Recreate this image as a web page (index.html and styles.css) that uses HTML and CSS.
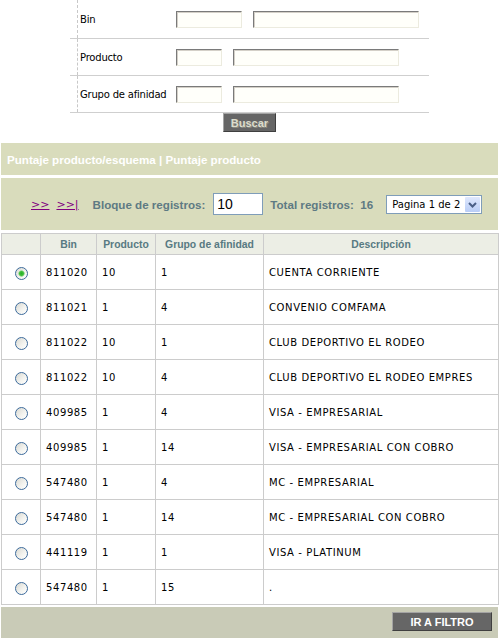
FILE: index.html
```html
<!DOCTYPE html>
<html lang="es">
<head>
<meta charset="utf-8">
<title>Puntaje producto</title>
<link rel="stylesheet" href="styles.css">
</head>
<body>
<div class="page">
  <form class="filter">
    <div class="frow frow-first">
      <label class="flabel">Bin</label>
      <input class="fin fin-short" type="text">
      <input class="fin fin-long" type="text">
    </div>
    <div class="frow">
      <label class="flabel">Producto</label>
      <input class="fin fin-tiny" type="text">
      <input class="fin fin-long" type="text">
    </div>
    <div class="frow">
      <label class="flabel">Grupo de afinidad</label>
      <input class="fin fin-tiny" type="text">
      <input class="fin fin-long" type="text">
    </div>
    <div class="factions"><button type="button" class="btn btn-buscar">Buscar</button></div>
  </form>

  <div class="bar bar-title">Puntaje producto/esquema | Puntaje producto</div>

  <div class="bar bar-pager">
    <a class="plink" href="#">&gt;&gt;</a>
    <a class="plink plink-last" href="#">&gt;&gt;|</a>
    <span class="plabel plabel-block">Bloque de registros:</span>
    <input class="pinput" type="text" value="10">
    <span class="plabel plabel-total">Total registros:&nbsp; 16</span>
    <div class="pselect">
      <span class="ptext">Pagina 1 de 2</span>
      <span class="parrow"><svg width="15" height="15" viewBox="0 0 15 15"><path d="M4 6 L7.5 9.5 L11 6" fill="none" stroke="#4a5f86" stroke-width="2"/></svg></span>
    </div>
  </div>

  <table class="grid">
    <colgroup>
      <col class="c-radio"><col class="c-bin"><col class="c-prod"><col class="c-grupo"><col class="c-desc">
    </colgroup>
    <thead>
      <tr><th></th><th>Bin</th><th>Producto</th><th>Grupo de afinidad</th><th>Descripción</th></tr>
    </thead>
    <tbody>
      <tr><td class="rc"><span class="radio radio-on"></span></td><td>811020</td><td>10</td><td>1</td><td>CUENTA CORRIENTE</td></tr>
      <tr><td class="rc"><span class="radio"></span></td><td>811021</td><td>1</td><td>4</td><td>CONVENIO COMFAMA</td></tr>
      <tr><td class="rc"><span class="radio"></span></td><td>811022</td><td>10</td><td>1</td><td>CLUB DEPORTIVO EL RODEO</td></tr>
      <tr><td class="rc"><span class="radio"></span></td><td>811022</td><td>10</td><td>4</td><td>CLUB DEPORTIVO EL RODEO EMPRES</td></tr>
      <tr><td class="rc"><span class="radio"></span></td><td>409985</td><td>1</td><td>4</td><td>VISA - EMPRESARIAL</td></tr>
      <tr><td class="rc"><span class="radio"></span></td><td>409985</td><td>1</td><td>14</td><td>VISA - EMPRESARIAL CON COBRO</td></tr>
      <tr><td class="rc"><span class="radio"></span></td><td>547480</td><td>1</td><td>4</td><td>MC - EMPRESARIAL</td></tr>
      <tr><td class="rc"><span class="radio"></span></td><td>547480</td><td>1</td><td>14</td><td>MC - EMPRESARIAL CON COBRO</td></tr>
      <tr><td class="rc"><span class="radio"></span></td><td>441119</td><td>1</td><td>1</td><td>VISA - PLATINUM</td></tr>
      <tr><td class="rc"><span class="radio"></span></td><td>547480</td><td>1</td><td>15</td><td>.</td></tr>
    </tbody>
  </table>

  <div class="bar bar-foot"><button type="button" class="btn btn-foot">IR A FILTRO</button></div>
</div>
</body>
</html>
```

FILE: styles.css
```css
html, body {
  margin: 0;
  padding: 0;
  background: #ffffff;
}

body {
  font-family: "DejaVu Sans", Verdana, sans-serif;
  font-size: 10px;
  color: #000;
}

.page {
  width: 497px;
  margin-left: 1px;
}

/* ---------- filter form ---------- */
.filter {
  width: 359px;
  margin: 0 0 0 69px;
}

.frow {
  display: flex;
  align-items: center;
  height: 36px;
  border-bottom: 1px solid #cfcfcf;
}

.frow-first {
  height: 38px;
}

.flabel {
  flex: 0 0 auto;
  align-self: stretch;
  display: flex;
  align-items: center;
  box-sizing: border-box;
  width: 99px;
  margin-left: 7px;
  padding-left: 2px;
  border-left: 1px dashed #c8c8c8;
  font-size: 10px;
  letter-spacing: -0.2px;
  color: #000;
  white-space: nowrap;
}

.fin {
  flex: 0 0 auto;
  box-sizing: border-box;
  height: 17px;
  margin: 0;
  padding: 0;
  background: #fffffa;
  border: 1px solid;
  border-color: #7a7a7a #ecebdf #ecebdf #7a7a7a;
  box-shadow: inset 1px 1px 0 #d4d0c8;
}

.fin + .fin {
  margin-left: 11px;
}

.fin-short { width: 66px; }
.fin-tiny { width: 46px; }
.fin-long { width: 166px; }

.factions {
  display: flex;
  justify-content: center;
}

.btn {
  box-sizing: border-box;
  margin: 0;
  padding: 0;
  background: #666666;
  border: 1px solid;
  border-color: #a4a4a4 #3f3f3f #3f3f3f #a4a4a4;
  font-family: "Liberation Sans", Arial, sans-serif;
  font-weight: bold;
  font-size: 11px;
  cursor: pointer;
}

.btn-buscar {
  width: 53px;
  height: 19px;
  color: #dcdccc;
  text-shadow: 1px 1px 0 #8a8a80;
}

/* ---------- bars ---------- */
.bar {
  box-sizing: border-box;
  width: 497px;
  background: #d9dcbc;
}

.bar-title {
  margin-top: 11px;
  height: 32px;
  padding-left: 6px;
  display: flex;
  align-items: center;
  font-family: "Liberation Sans", Arial, sans-serif;
  font-weight: bold;
  font-size: 11.6px;
  color: #ffffff;
}

.bar-pager {
  margin-top: 3px;
  height: 52px;
  padding-left: 30px;
  display: flex;
  align-items: center;
}

.plink {
  font-family: "DejaVu Sans", Verdana, sans-serif;
  font-size: 11px;
  color: #800080;
  text-decoration: underline;
}

.plink-last {
  margin-left: 7px;
}

.plabel {
  font-family: "Liberation Sans", Arial, sans-serif;
  font-weight: bold;
  font-size: 11.6px;
  color: #5e7a83;
  white-space: nowrap;
}

.plabel-block {
  margin-left: 14px;
}

.pinput {
  box-sizing: border-box;
  width: 50px;
  height: 22px;
  margin: 0 7px 0 8px;
  padding: 0 3px;
  border: 1px solid #7f9db9;
  background: #ffffff;
  font-family: "Liberation Sans", Arial, sans-serif;
  font-size: 14px;
  color: #000;
}

.pselect {
  box-sizing: border-box;
  margin-left: 13px;
  width: 96px;
  height: 19px;
  display: flex;
  align-items: center;
  justify-content: space-between;
  background: #ffffff;
  border: 1px solid #7f9db9;
  padding: 0 1px 0 5px;
}

.ptext {
  font-family: "DejaVu Sans", Verdana, sans-serif;
  font-size: 10px;
  color: #000;
  white-space: nowrap;
}

.parrow {
  display: flex;
  width: 15px;
  height: 15px;
  background: linear-gradient(#dfe8fd, #b9cdf6);
  border-radius: 1px;
}

/* ---------- grid ---------- */
.grid {
  margin-top: 3px;
  width: 497px;
  border-collapse: collapse;
  table-layout: fixed;
}

.c-radio { width: 39px; }
.c-bin { width: 56px; }
.c-prod { width: 59px; }
.c-grupo { width: 108px; }
.c-desc { width: 235px; }

.grid th {
  height: 20px;
  padding: 0;
  background: #eceee5;
  border: 1px solid #cccccc;
  font-family: "Liberation Sans", Arial, sans-serif;
  font-weight: bold;
  font-size: 10.4px;
  color: #587a82;
  text-align: center;
  white-space: nowrap;
}

.grid td {
  height: 34px;
  padding: 0 0 0 5px;
  border: 1px solid #cccccc;
  font-family: "DejaVu Sans", Verdana, sans-serif;
  font-size: 10px;
  letter-spacing: 0.6px;
  color: #000;
  white-space: nowrap;
  overflow: hidden;
}

.grid td.rc {
  padding: 0;
  text-align: center;
}

.radio {
  display: inline-block;
  box-sizing: border-box;
  width: 13px;
  height: 13px;
  margin-top: 2px;
  border-radius: 50%;
  border: 1px solid #3d6b9c;
  background: linear-gradient(135deg, #d9d9d2 0%, #f4f4f0 60%, #ffffff 100%);
  vertical-align: middle;
}

.radio-on {
  background: radial-gradient(circle, #26b028 0, #3fbf3a 2px, #a9dda6 3px, rgba(255,255,255,0) 3.5px),
              linear-gradient(135deg, #d9d9d2 0%, #f4f4f0 60%, #ffffff 100%);
}

/* ---------- footer ---------- */
.bar-foot {
  margin-top: 2px;
  height: 31px;
  background: #c9cbb7;
  display: flex;
  justify-content: flex-end;
  align-items: flex-start;
  padding: 5px 6px 0 0;
}

.btn-foot {
  width: 100px;
  height: 19px;
  color: #ffffff;
}
```
